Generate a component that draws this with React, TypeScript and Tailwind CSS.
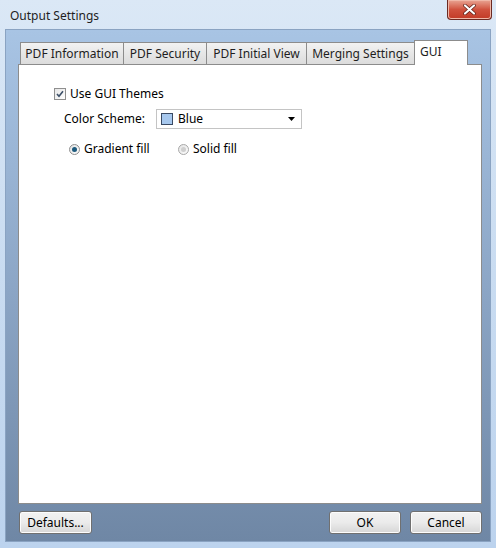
const tabs = [
  { label: 'PDF Information', w: 'w-[104px]' },
  { label: 'PDF Security', w: 'w-[84px]' },
  { label: 'PDF Initial View', w: 'w-[101px]' },
  { label: 'Merging Settings', w: 'w-[109px]' },
]

function Button({ label, className }: { label: string; className: string }) {
  return (
    <button
      type="button"
      className={`h-[23px] rounded-[3px] border border-[#707070] bg-gradient-to-b from-[#f2f2f2] via-[#ebebeb] to-[#d6d6d6] text-[12px] text-black shadow-[inset_0_0_0_1px_#fcfcfc] ${className}`}
    >
      {label}
    </button>
  )
}

export default function App() {
  return (
    <div
      className="w-[496px] h-[548px] bg-gradient-to-b from-[#dbe8f6] via-[#c9dcf1] to-[#bcd3ee] text-[12px] text-black"
      style={{ fontFamily: '"Noto Sans", "Open Sans", sans-serif' }}
    >
      {/* title bar */}
      <div className="h-[29px] flex items-start justify-between pl-[10px] pr-[4px]">
        <span className="mt-[7px] text-[12px] text-[#1e1e1e]">Output Settings</span>
        <div className="w-[45px] h-[20px] rounded-b-[4px] border border-t-0 border-[#6b2a22] bg-gradient-to-b from-[#e8a493] via-[#d0523e] to-[#c23a26] flex items-center justify-center shadow-[inset_0_0_0_1px_#f0b8a8]">
          <svg width="13" height="11" viewBox="0 0 13 11">
            <path d="M2 1.5 L11 9.5 M11 1.5 L2 9.5" stroke="#5a1d14" strokeWidth="3.6" strokeLinecap="round" />
            <path d="M2 1.5 L11 9.5 M11 1.5 L2 9.5" stroke="#ffffff" strokeWidth="2.2" strokeLinecap="round" />
          </svg>
        </div>
      </div>

      {/* client area */}
      <div className="mx-[5px] h-[513px] border border-[#8aa3c2] bg-gradient-to-b from-[#a8c4e4] via-[#8ca6c6] to-[#6f87a5] flex flex-col pl-[12px] pr-[8px] pt-[9px]">
        <div className="flex items-end h-[25px] pl-[2px]">
          {tabs.map(t => (
            <div
              key={t.label}
              className={`${t.w} h-[22px] -mr-px border border-b-0 border-[#8c8c8c] bg-gradient-to-b from-[#f2f2f2] to-[#dcdcdc] flex items-center justify-center text-[12px] text-[#1e1e1e]`}
            >
              {t.label}
            </div>
          ))}
          <div className="w-[54px] h-[25px] -mb-px border border-b-0 border-[#8c8c8c] bg-white z-10 flex items-start pl-[5px] pt-[2px] text-[12px] text-[#1e1e1e]">
            GUI
          </div>
        </div>

        <div className="h-[440px] border border-[#8c8c8c] bg-white">
          <div className="pl-[35px] pt-[21px]">
            <label className="flex items-center gap-[4px] h-[16px]">
              <span className="w-[12px] h-[12px] border border-[#8f8f8f] bg-gradient-to-br from-[#e6e6e6] to-[#ffffff] flex items-center justify-center">
                <svg width="8" height="8" viewBox="0 0 8 8">
                  <path d="M1 4 L3 6.3 L7 1.2" fill="none" stroke="#3c4f68" strokeWidth="1.6" />
                </svg>
              </span>
              <span>Use GUI Themes</span>
            </label>

            <div className="flex items-center mt-[7px] ml-[10px] h-[20px]">
              <span className="w-[92px]">Color Scheme:</span>
              <div className="w-[146px] h-[20px] border border-[#c4c4c4] bg-white flex items-center pl-[4px] pr-[6px]">
                <span className="w-[12px] h-[12px] border border-[#3a4a63] bg-[#a7c8ee]" />
                <span className="ml-[5px] flex-1">Blue</span>
                <svg width="7" height="4" viewBox="0 0 7 4">
                  <path d="M0 0 H7 L3.5 4 Z" fill="#000" />
                </svg>
              </div>
            </div>

            <div className="flex items-center mt-[11px] ml-[15px] h-[18px]">
              <span className="w-[11px] h-[11px] rounded-full border border-[#8f8f8f] bg-gradient-to-br from-[#e3e3e3] to-[#fdfdfd] flex items-center justify-center">
                <span className="w-[5px] h-[5px] rounded-full bg-[#1d5a7d]" />
              </span>
              <span className="ml-[4px] w-[94px]">Gradient fill</span>
              <span className="w-[11px] h-[11px] rounded-full border border-[#a8a8a8] bg-gradient-to-br from-[#e3e3e3] to-[#fdfdfd] flex items-center justify-center">
                <span className="w-[5px] h-[5px] rounded-full bg-[#cfcfcf]" />
              </span>
              <span className="ml-[4px]">Solid fill</span>
            </div>
          </div>
        </div>

        <div className="flex items-center justify-between mt-[7px] pl-[1px]">
          <Button label="Defaults..." className="w-[73px]" />
          <div className="flex gap-[9px]">
            <Button label="OK" className="w-[72px]" />
            <Button label="Cancel" className="w-[72px]" />
          </div>
        </div>
      </div>
    </div>
  )
}
